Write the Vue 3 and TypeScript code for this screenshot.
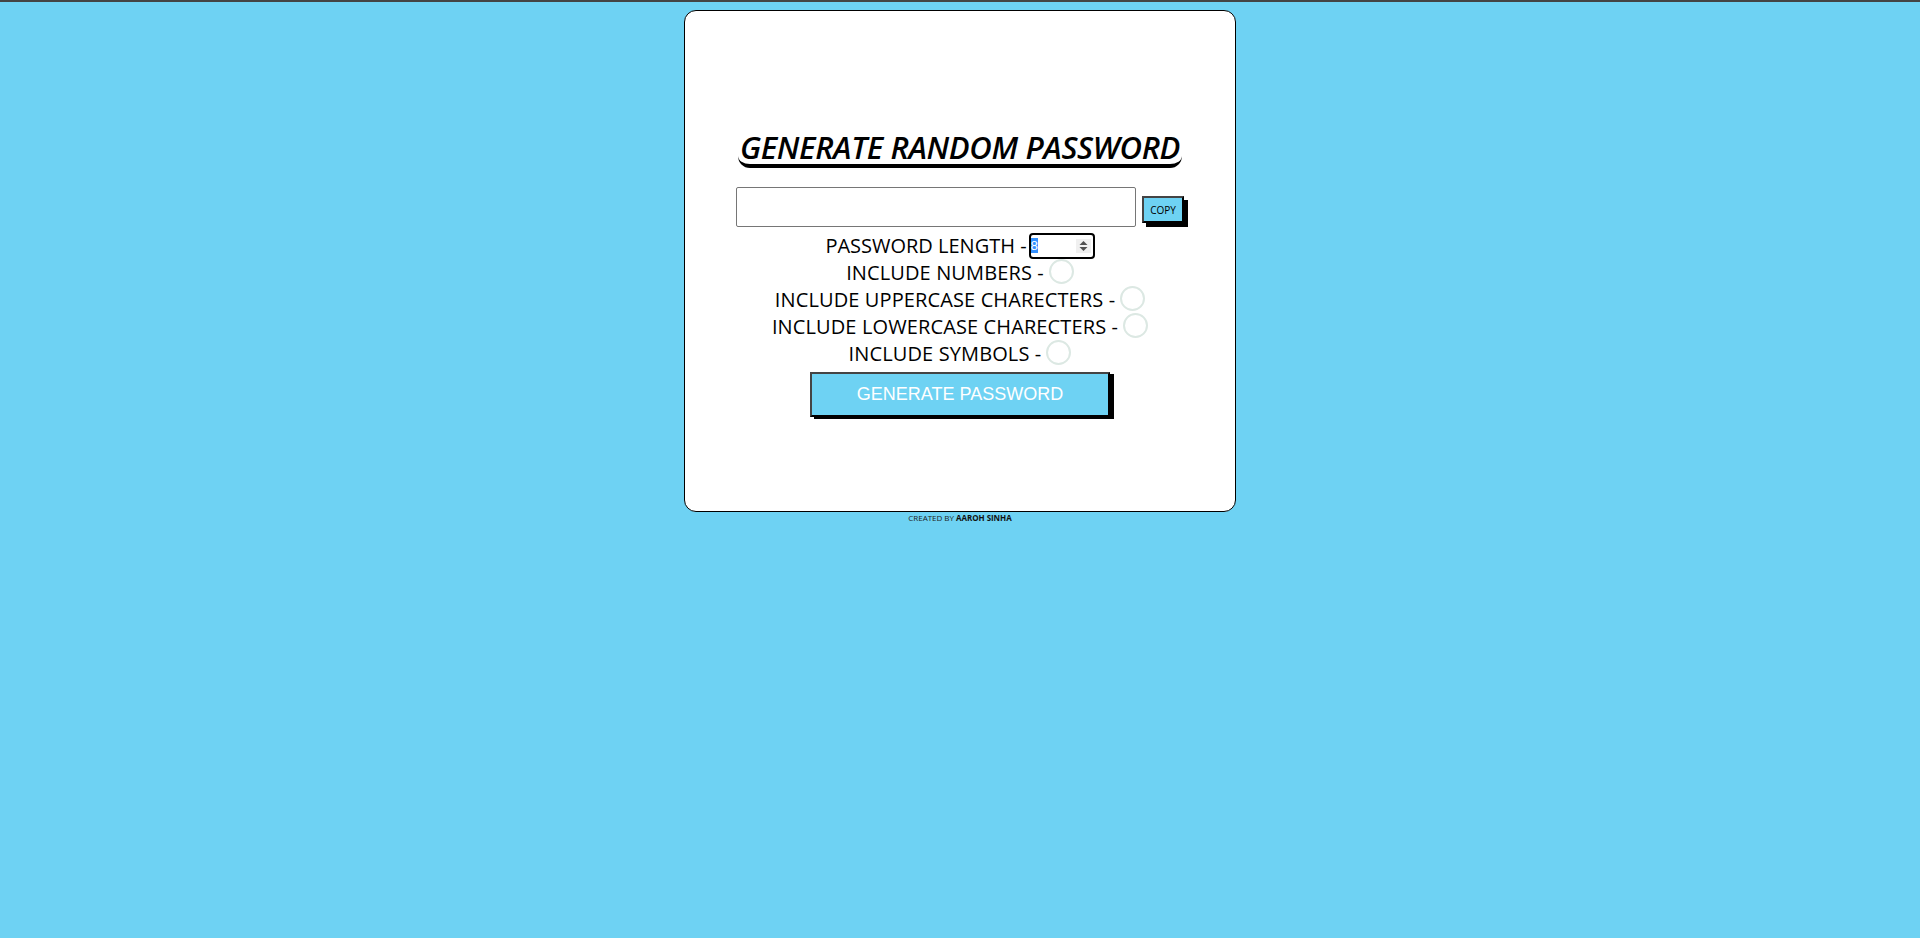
<template>
  <div class="page">
    <main class="card">
      <h1 class="title">GENERATE RANDOM PASSWORD</h1>
      <div class="output-row">
        <input class="output" type="text" readonly />
        <button class="copy" type="button">COPY</button>
      </div>
      <div class="option option--length">
        <label for="length">PASSWORD LENGTH -</label>
        <span class="length-box">
          <input id="length" ref="lengthInput" v-model="length" class="length" type="number" min="1" max="50" />
          <svg class="spin" width="15" height="14" viewBox="0 0 15 14" aria-hidden="true">
            <rect width="15" height="14" fill="#f0f0f0" />
            <path d="M7.5 2 11.5 6h-8zM7.5 12 3.5 8h8z" fill="#505050" />
          </svg>
        </span>
      </div>
      <div v-for="option in options" :key="option" class="option">
        <label>{{ option }} -</label>
        <input class="check" type="checkbox" />
      </div>
      <button class="generate" type="button">GENERATE PASSWORD</button>
    </main>
    <footer class="credit">CREATED BY <b>AAROH SINHA</b></footer>
  </div>
</template>

<script setup lang="ts">
import { onMounted, ref } from 'vue';

const length = ref(8);
const lengthInput = ref<HTMLInputElement | null>(null);
const options = [
  'INCLUDE NUMBERS',
  'INCLUDE UPPERCASE CHARECTERS',
  'INCLUDE LOWERCASE CHARECTERS',
  'INCLUDE SYMBOLS',
];

onMounted(() => {
  lengthInput.value?.focus();
  lengthInput.value?.select();
});
</script>

<style>
html,
body {
  margin: 0;
  background: #6ed2f3;
}
</style>

<style scoped>
.page {
  box-sizing: border-box;
  height: 938px;
  overflow: hidden;
  border-top: 2px solid #444;
  padding-top: 8px;
  background: #6ed2f3;
  font-family: 'Open Sans', 'Liberation Sans', sans-serif;
  color: #000;
}
.card {
  box-sizing: border-box;
  width: 552px;
  height: 502px;
  margin: 0 auto;
  padding-top: 18px;
  display: flex;
  flex-direction: column;
  align-items: center;
  justify-content: center;
  background: #fff;
  border: 1px solid #000;
  border-radius: 12px;
}
.title {
  margin: 0 0 19px;
  padding: 7px 2px 0;
  font-size: 31px;
  line-height: 34px;
  font-weight: 600;
  font-style: italic;
  letter-spacing: -0.35px;
  white-space: nowrap;
  border-bottom: 4px solid #000;
  border-radius: 0 0 12px 12px;
}
.output-row {
  display: flex;
  align-items: center;
  gap: 6px;
  margin-bottom: 5px;
}
.output {
  box-sizing: border-box;
  width: 400px;
  height: 40px;
  border: 1px solid #767676;
  border-radius: 2px;
  outline: none;
}
.copy {
  box-sizing: border-box;
  width: 42px;
  height: 27px;
  margin-top: 5px;
  padding: 0;
  border: 2px solid #444;
  border-right-color: #000;
  border-bottom-color: #000;
  background: #6ed2f3;
  box-shadow: 4px 4px 0 #000;
  font-family: inherit;
  font-size: 10px;
  color: #000;
}
.option {
  display: flex;
  align-items: center;
  justify-content: center;
  gap: 5px;
  height: 27px;
  font-size: 20px;
  letter-spacing: 0.12px;
}
.option--length {
  gap: 2px;
  letter-spacing: 0;
}
.length-box {
  position: relative;
  display: block;
  width: 66px;
  height: 26px;
}
.length {
  box-sizing: border-box;
  display: block;
  width: 62px;
  height: 22px;
  margin: 2px;
  padding: 1px 0;
  border: 0;
  font-family: 'Liberation Sans', sans-serif;
  font-size: 13.33px;
  appearance: textfield;
}
.length::-webkit-inner-spin-button,
.length::-webkit-outer-spin-button {
  appearance: none;
  margin: 0;
}
.length::selection {
  background: #3390ff;
  color: #fff;
}
.length:focus {
  outline: 2px solid #000;
  outline-offset: 0;
  border-radius: 2px;
}
.spin {
  position: absolute;
  top: 6px;
  right: 4px;
}
.check {
  appearance: none;
  box-sizing: border-box;
  width: 25px;
  height: 25px;
  margin: 0 0 2px;
  border: 2px solid #dce8e3;
  border-radius: 50%;
  background: #fff;
}
.generate {
  box-sizing: border-box;
  width: 300px;
  height: 45px;
  margin-top: 5px;
  border: 2px solid #444;
  border-right-color: #000;
  border-bottom-color: #000;
  background: #6ed2f3;
  box-shadow: 4px 2px 0 #000;
  font-family: 'Liberation Sans', sans-serif;
  font-size: 18px;
  color: #fff;
}
.credit {
  text-align: center;
  font-size: 8px;
  line-height: 11px;
  letter-spacing: -0.03px;
  color: #222;
}
.credit b {
  color: #111;
}
</style>
